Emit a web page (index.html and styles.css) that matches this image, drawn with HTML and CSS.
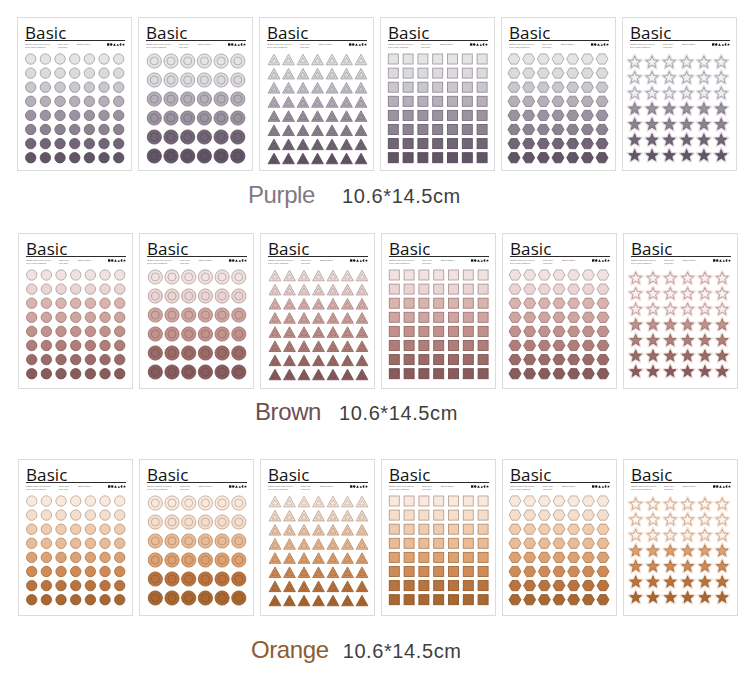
FILE: index.html
```html
<!DOCTYPE html>
<html lang="en">
<head>
<meta charset="utf-8">
<title>Basic stickers</title>
<link rel="stylesheet" href="styles.css">
</head>
<body>
<svg class="defs" aria-hidden="true">
  <symbol id="ico" viewBox="0 0 24 4">
    <rect x="0" y="0.4" width="3.2" height="3.2"/>
    <circle cx="5.6" cy="2" r="1.6"/>
    <path d="M8.2 3.6 L10 0.4 L11.8 3.6Z"/>
    <path d="M12.8 3.6 L14.4 0.9 L16 3.6Z"/>
    <path d="M18.6 0.4 A1.6 1.6 0 1 0 18.6 3.6Z"/>
    <circle cx="18.6" cy="2" r="1.4" fill="none" stroke="#111" stroke-width="0.4"/>
    <path d="M22 0.2 L22.5 1.4 L23.8 1.5 L22.8 2.3 L23.1 3.7 L22 2.9 L20.9 3.7 L21.2 2.3 L20.2 1.5 L21.5 1.4Z"/>
  </symbol>
</svg>

<main class="page">
  <section class="row row--first">
    <div class="card"><div class="card-head"><div class="card-title">Basic</div><div class="card-info"><div class="info-a">Obtain and color series<br>Pure color gradient</div><div class="info-b">Drop size<br>Mini size</div><div class="info-c">Basic shape</div><svg class="info-icons"><use href="#ico"/></svg></div></div><svg class="grid" viewBox="1 35 113 118" data-shape="circle" data-pal="purple"></svg></div>
    <div class="card"><div class="card-head"><div class="card-title">Basic</div><div class="card-info"><div class="info-a">Obtain and color series<br>Pure color gradient</div><div class="info-b">Drop size<br>Mini size</div><div class="info-c">Basic shape</div><svg class="info-icons"><use href="#ico"/></svg></div></div><svg class="grid" viewBox="1 35 113 118" data-shape="ring" data-pal="purple"></svg></div>
    <div class="card"><div class="card-head"><div class="card-title">Basic</div><div class="card-info"><div class="info-a">Obtain and color series<br>Pure color gradient</div><div class="info-b">Drop size<br>Mini size</div><div class="info-c">Basic shape</div><svg class="info-icons"><use href="#ico"/></svg></div></div><svg class="grid" viewBox="1 35 113 118" data-shape="tri" data-pal="purple"></svg></div>
    <div class="card"><div class="card-head"><div class="card-title">Basic</div><div class="card-info"><div class="info-a">Obtain and color series<br>Pure color gradient</div><div class="info-b">Drop size<br>Mini size</div><div class="info-c">Basic shape</div><svg class="info-icons"><use href="#ico"/></svg></div></div><svg class="grid" viewBox="1 35 113 118" data-shape="square" data-pal="purple"></svg></div>
    <div class="card"><div class="card-head"><div class="card-title">Basic</div><div class="card-info"><div class="info-a">Obtain and color series<br>Pure color gradient</div><div class="info-b">Drop size<br>Mini size</div><div class="info-c">Basic shape</div><svg class="info-icons"><use href="#ico"/></svg></div></div><svg class="grid" viewBox="1 35 113 118" data-shape="hex" data-pal="purple"></svg></div>
    <div class="card"><div class="card-head"><div class="card-title">Basic</div><div class="card-info"><div class="info-a">Obtain and color series<br>Pure color gradient</div><div class="info-b">Drop size<br>Mini size</div><div class="info-c">Basic shape</div><svg class="info-icons"><use href="#ico"/></svg></div></div><svg class="grid" viewBox="1 35 113 118" data-shape="star" data-pal="purple"></svg></div>
  </section>
  <div class="label label--purple"><span class="label-color">Purple</span><span class="label-size">10.6*14.5cm</span></div>

  <section class="row row--second">
    <div class="card"><div class="card-head"><div class="card-title">Basic</div><div class="card-info"><div class="info-a">Obtain and color series<br>Pure color gradient</div><div class="info-b">Drop size<br>Mini size</div><div class="info-c">Basic shape</div><svg class="info-icons"><use href="#ico"/></svg></div></div><svg class="grid" viewBox="1 35 113 118" data-shape="circle" data-pal="brown"></svg></div>
    <div class="card"><div class="card-head"><div class="card-title">Basic</div><div class="card-info"><div class="info-a">Obtain and color series<br>Pure color gradient</div><div class="info-b">Drop size<br>Mini size</div><div class="info-c">Basic shape</div><svg class="info-icons"><use href="#ico"/></svg></div></div><svg class="grid" viewBox="1 35 113 118" data-shape="ring" data-pal="brown"></svg></div>
    <div class="card"><div class="card-head"><div class="card-title">Basic</div><div class="card-info"><div class="info-a">Obtain and color series<br>Pure color gradient</div><div class="info-b">Drop size<br>Mini size</div><div class="info-c">Basic shape</div><svg class="info-icons"><use href="#ico"/></svg></div></div><svg class="grid" viewBox="1 35 113 118" data-shape="tri" data-pal="brown"></svg></div>
    <div class="card"><div class="card-head"><div class="card-title">Basic</div><div class="card-info"><div class="info-a">Obtain and color series<br>Pure color gradient</div><div class="info-b">Drop size<br>Mini size</div><div class="info-c">Basic shape</div><svg class="info-icons"><use href="#ico"/></svg></div></div><svg class="grid" viewBox="1 35 113 118" data-shape="square" data-pal="brown"></svg></div>
    <div class="card"><div class="card-head"><div class="card-title">Basic</div><div class="card-info"><div class="info-a">Obtain and color series<br>Pure color gradient</div><div class="info-b">Drop size<br>Mini size</div><div class="info-c">Basic shape</div><svg class="info-icons"><use href="#ico"/></svg></div></div><svg class="grid" viewBox="1 35 113 118" data-shape="hex" data-pal="brown"></svg></div>
    <div class="card"><div class="card-head"><div class="card-title">Basic</div><div class="card-info"><div class="info-a">Obtain and color series<br>Pure color gradient</div><div class="info-b">Drop size<br>Mini size</div><div class="info-c">Basic shape</div><svg class="info-icons"><use href="#ico"/></svg></div></div><svg class="grid" viewBox="1 35 113 118" data-shape="star" data-pal="brown"></svg></div>
  </section>
  <div class="label label--brown"><span class="label-color">Brown</span><span class="label-size">10.6*14.5cm</span></div>

  <section class="row row--third">
    <div class="card"><div class="card-head"><div class="card-title">Basic</div><div class="card-info"><div class="info-a">Obtain and color series<br>Pure color gradient</div><div class="info-b">Drop size<br>Mini size</div><div class="info-c">Basic shape</div><svg class="info-icons"><use href="#ico"/></svg></div></div><svg class="grid" viewBox="1 35 113 118" data-shape="circle" data-pal="orange"></svg></div>
    <div class="card"><div class="card-head"><div class="card-title">Basic</div><div class="card-info"><div class="info-a">Obtain and color series<br>Pure color gradient</div><div class="info-b">Drop size<br>Mini size</div><div class="info-c">Basic shape</div><svg class="info-icons"><use href="#ico"/></svg></div></div><svg class="grid" viewBox="1 35 113 118" data-shape="ring" data-pal="orange"></svg></div>
    <div class="card"><div class="card-head"><div class="card-title">Basic</div><div class="card-info"><div class="info-a">Obtain and color series<br>Pure color gradient</div><div class="info-b">Drop size<br>Mini size</div><div class="info-c">Basic shape</div><svg class="info-icons"><use href="#ico"/></svg></div></div><svg class="grid" viewBox="1 35 113 118" data-shape="tri" data-pal="orange"></svg></div>
    <div class="card"><div class="card-head"><div class="card-title">Basic</div><div class="card-info"><div class="info-a">Obtain and color series<br>Pure color gradient</div><div class="info-b">Drop size<br>Mini size</div><div class="info-c">Basic shape</div><svg class="info-icons"><use href="#ico"/></svg></div></div><svg class="grid" viewBox="1 35 113 118" data-shape="square" data-pal="orange"></svg></div>
    <div class="card"><div class="card-head"><div class="card-title">Basic</div><div class="card-info"><div class="info-a">Obtain and color series<br>Pure color gradient</div><div class="info-b">Drop size<br>Mini size</div><div class="info-c">Basic shape</div><svg class="info-icons"><use href="#ico"/></svg></div></div><svg class="grid" viewBox="1 35 113 118" data-shape="hex" data-pal="orange"></svg></div>
    <div class="card"><div class="card-head"><div class="card-title">Basic</div><div class="card-info"><div class="info-a">Obtain and color series<br>Pure color gradient</div><div class="info-b">Drop size<br>Mini size</div><div class="info-c">Basic shape</div><svg class="info-icons"><use href="#ico"/></svg></div></div><svg class="grid" viewBox="1 35 113 118" data-shape="star" data-pal="orange"></svg></div>
  </section>
  <div class="label label--orange"><span class="label-color">Orange</span><span class="label-size">10.6*14.5cm</span></div>
</main>
<script src="script.js"></script>
</body>
</html>
```

FILE: styles.css
```css
html, body {
  margin: 0;
  padding: 0;
  background: #ffffff;
}

body {
  font-family: "Liberation Sans", Arial, sans-serif;
  color: #333;
}

.defs {
  position: absolute;
  width: 0;
  height: 0;
  overflow: hidden;
}

.page {
  padding-top: 17px;
  display: flex;
  flex-direction: column;
}

.row {
  display: flex;
  gap: 6px;
  padding-left: 18px;
}

.row--first { padding-left: 17px; }

.card {
  width: 115px;
  height: 154px;
  box-sizing: border-box;
  border: 1px solid #dcdcdc;
  background: #fff;
  display: flex;
  flex-direction: column;
  flex: none;
  overflow: hidden;
}

.row--second .card { height: 156px; }
.row--third .card { height: 157px; }

.card-head {
  height: 34px;
  box-sizing: border-box;
  padding: 7px 6px 0 7px;
  flex: none;
}

.card-title {
  font-family: "Open Sans", "Noto Sans", sans-serif;
  font-size: 17px;
  line-height: 15px;
  color: #111;
  border-bottom: 1px solid #2b2b2b;
  letter-spacing: 0.1px;
}

.card-info {
  margin-top: 2px;
  display: grid;
  grid-template-columns: 33px 19px 28px 1fr;
  align-items: start;
  font-family: "Liberation Sans", Arial, sans-serif;
  font-size: 2.4px;
  line-height: 3.4px;
  color: #666;
  white-space: nowrap;
}

.info-icons {
  width: 18px;
  height: 3px;
  justify-self: end;
  fill: #111;
}

.grid {
  width: 113px;
  height: 118px;
  display: block;
  flex: none;
}

.label {
  display: flex;
  align-items: baseline;
  height: 28px;
}

.label-color {
  font-size: 24px;
  line-height: 28px;
  letter-spacing: -0.4px;
}

.label-size {
  font-size: 20px;
  line-height: 20px;
  letter-spacing: 0.6px;
  color: #3f3f3f;
}

.label--purple {
  margin: 10px 0 24px;
  padding-left: 248px;
  gap: 27px;
}
.label--purple .label-color { color: #827786; }

.label--brown {
  margin: 9px 0 33px;
  padding-left: 255px;
  gap: 18px;
}
.label--brown .label-color { color: #6e5150; }

.label--orange {
  margin: 20px 0 0;
  padding-left: 251px;
  gap: 14px;
}
.label--orange .label-color { color: #8d5c33; }
```

FILE: script.js
```js
(function () {
  var PAL = {
    purple: {
      fills: ['#e4e3e5', '#dcdadd', '#cbc7ce', '#b5afba', '#9c93a1', '#8b848f', '#716576', '#625567'],
      ink: '#3a2e3d',
      halo: '#e2dfe3'
    },
    brown: {
      fills: ['#efe2e1', '#e9d6d4', '#d9b4af', '#d0a49f', '#c3918b', '#b07e79', '#9b6b68', '#885b5c'],
      ink: '#4d2f31',
      halo: '#f0e1df'
    },
    orange: {
      fills: ['#f8e9df', '#f4dfcf', '#efcbb0', '#eabb97', '#dea171', '#cf8a56', '#ba733d', '#a96731'],
      ink: '#5a3416',
      halo: '#f6e2d3'
    }
  };

  var SPECS = {
    circle: { cols: 7, rows: 8, x0: 13.7, dx: 14.67, y0: 42, dy: 14.1, map: [0, 1, 2, 3, 4, 5, 6, 7] },
    ring:   { cols: 6, rows: 6, x0: 16.3, dx: 16.7, y0: 44, dy: 19, map: [0, 1, 3, 4, 6, 7] },
    tri:    { cols: 7, rows: 8, x0: 15, dx: 14.5, y0: 43, dy: 14.14, map: [0, 1, 2, 3, 4, 5, 6, 7] },
    square: { cols: 7, rows: 8, x0: 13.3, dx: 14.8, y0: 42, dy: 14.1, map: [0, 1, 2, 3, 4, 5, 6, 7] },
    hex:    { cols: 7, rows: 8, x0: 13, dx: 14.67, y0: 42, dy: 14.1, map: [0, 1, 2, 3, 4, 5, 6, 7] },
    star:   { cols: 6, rows: 7, x0: 12.7, dx: 17.3, y0: 44.7, dy: 15.55, map: [0, 0, 1, 4, 5, 6, 7] }
  };

  function rgb(h) {
    h = h.replace('#', '');
    return [0, 2, 4].map(function (i) { return parseInt(h.substr(i, 2), 16); });
  }
  function mix(a, b, t) {
    var A = rgb(a), B = rgb(b);
    var c = A.map(function (v, i) { return Math.round(v + (B[i] - v) * t); });
    return '#' + c.map(function (v) { return ('0' + v.toString(16)).slice(-2); }).join('');
  }
  function f(n) { return (Math.round(n * 100) / 100).toString(); }

  function poly(pts) {
    return pts.map(function (p) { return f(p[0]) + ',' + f(p[1]); }).join(' ');
  }

  function starPts(cx, cy, R, r) {
    var pts = [];
    for (var k = 0; k < 10; k++) {
      var a = (-90 + k * 36) * Math.PI / 180;
      var rad = k % 2 === 0 ? R : r;
      pts.push([cx + rad * Math.cos(a), cy + rad * Math.sin(a)]);
    }
    return pts;
  }

  function draw(shape, pal) {
    var s = SPECS[shape];
    var out = '';
    for (var r = 0; r < s.rows; r++) {
      var fill = pal.fills[s.map[r]];
      var stroke = mix(fill, pal.ink, 0.38);
      for (var c = 0; c < s.cols; c++) {
        var x = s.x0 + c * s.dx;
        var y = s.y0 + r * s.dy;
        if (shape === 'circle') {
          out += '<circle cx="' + f(x) + '" cy="' + f(y) + '" r="5.2" fill="' + fill + '" stroke="' + stroke + '" stroke-width="0.8"/>';
        } else if (shape === 'ring') {
          out += '<circle cx="' + f(x) + '" cy="' + f(y) + '" r="7.1" fill="' + fill + '" stroke="' + stroke + '" stroke-width="0.8"/>';
          out += '<circle cx="' + f(x) + '" cy="' + f(y) + '" r="4" fill="none" stroke="' + stroke + '" stroke-width="0.7"/>';
        } else if (shape === 'tri') {
          var outer = [[x, y - 5.8], [x + 5.9, y + 4.8], [x - 5.9, y + 4.8]];
          var inner = [[x, y - 2.2], [x + 3, y + 2.9], [x - 3, y + 2.9]];
          out += '<polygon points="' + poly(outer) + '" fill="' + fill + '" stroke="' + stroke + '" stroke-width="0.8" stroke-linejoin="round"/>';
          out += '<polygon points="' + poly(inner) + '" fill="none" stroke="' + stroke + '" stroke-width="0.6"/>';
        } else if (shape === 'square') {
          out += '<rect x="' + f(x - 5) + '" y="' + f(y - 5) + '" width="10" height="10" fill="' + fill + '" stroke="' + stroke + '" stroke-width="0.9"/>';
        } else if (shape === 'hex') {
          var hp = [[x - 6, y], [x - 3, y - 5.1], [x + 3, y - 5.1], [x + 6, y], [x + 3, y + 5.1], [x - 3, y + 5.1]];
          out += '<polygon points="' + poly(hp) + '" fill="' + fill + '" stroke="' + stroke + '" stroke-width="0.8"/>';
        } else if (shape === 'star') {
          var sp = poly(starPts(x, y + 0.6, 7.2, 3.1));
          var sfill = r < 3 ? mix(fill, '#ffffff', 0.55) : fill;
          var sstroke = r < 3 ? mix(pal.fills[3], pal.ink, 0.3) : mix(fill, pal.ink, 0.45);
          out += '<polygon points="' + sp + '" fill="' + pal.halo + '" stroke="' + pal.halo + '" stroke-width="2.6" stroke-linejoin="round"/>';
          out += '<polygon points="' + poly(starPts(x, y + 0.6, 6.2, 2.7)) + '" fill="' + sfill + '" stroke="' + sstroke + '" stroke-width="0.7" stroke-linejoin="round"/>';
        }
      }
    }
    return out;
  }

  var grids = document.querySelectorAll('svg.grid');
  for (var i = 0; i < grids.length; i++) {
    var g = grids[i];
    g.innerHTML = draw(g.getAttribute('data-shape'), PAL[g.getAttribute('data-pal')]);
  }
})();
```
